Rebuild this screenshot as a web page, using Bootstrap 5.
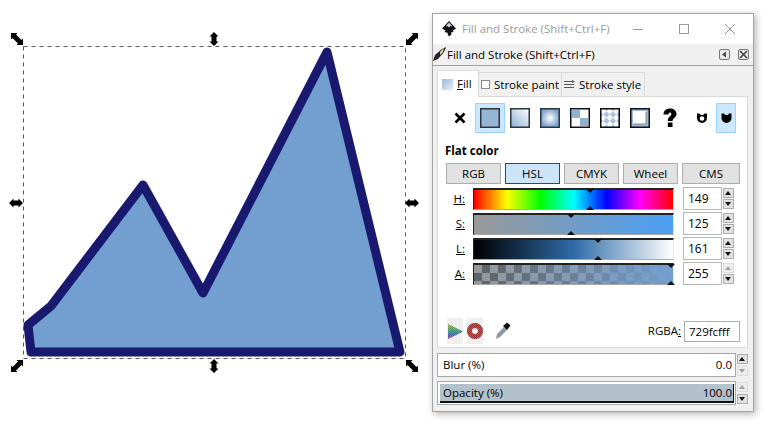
<!doctype html>
<html lang="en">
<head>
<meta charset="utf-8">
<title>Fill and Stroke</title>
<link href="https://cdn.jsdelivr.net/npm/bootstrap@5.3.1/dist/css/bootstrap.min.css" rel="stylesheet">
<style>
body { margin: 0; background: #fff; overflow: hidden; font-family: "Open Sans", "Liberation Sans", sans-serif; font-size: 11.5px; color: #000; line-height: 1; }
.stage { position: relative; width: 775px; height: 431px; overflow: hidden; }
.canvas-art { position: absolute; left: 0; top: 0; }

/* dialog window */
.dlg { position: absolute; left: 432px; top: 13px; width: 322px; height: 399px; background: #f0f0f0; border: 1px solid #a3a3a3; box-shadow: 2px 2px 7px rgba(0,0,0,.3); display: flex; flex-direction: column; }
.titlebar { height: 30px; background: #fff; flex: none; }
.title-txt { margin-left: 5px; color: #9a9a9a; white-space: nowrap; }
.win-btn { width: 46px; display: flex; justify-content: center; flex: none; }
.dockbar { height: 22px; border-bottom: 1px solid #a0a0a0; flex: none; }
.dock-btn { width: 11px; height: 11px; border: 1px solid #777; border-radius: 2px; background: #e8e8e8; display: block; }

/* tabs */
.tabs-wrap { padding: 4px 5px 0 4px; flex: none; height: 282px; display: flex; flex-direction: column; }
.tabs-row { height: 26px; flex: none; align-items: flex-end; position: relative; z-index: 1; }
.tab-item { height: 24px; width: 84px; padding: 0 2px; background: #f0f0f0; border: 1px solid #d9d9d9; border-bottom: 0; display: flex; align-items: center; gap: 4px; margin-left: -1px; white-space: nowrap; }
.tab-item svg { flex: none; }
.tab-item.on { height: 27px; width: 42px; background: #fff; margin-left: 0; margin-bottom: -1px; padding-left: 4px; }
.tab-body { flex: 1; background: #fff; border: 1px solid #d9d9d9; padding: 6px 7px 0 7px; display: flex; flex-direction: column; }

.paint-row { height: 30px; flex: none; }
.paint-x { width: 30px; font-size: 0; padding-left: 9px; flex: none; }
.paint-btn { width: 30px; height: 30px; display: flex; align-items: center; justify-content: center; flex: none; }
.paint-btn.on { background: #cce8ff; border: 1px solid #99d1ff; }
.rule-btn { width: 20px; height: 30px; display: flex; align-items: center; justify-content: center; flex: none; }
.rule-btn.on { background: #cce8ff; border: 1px solid #99d1ff; }
.flat-lbl { font-weight: 700; margin: 12px 0 6px 0; height: 12px; line-height: 12px; }

.mode-row { gap: 4px; height: 21px; margin-left: 1px; margin-bottom: 4px; }
.mode-btn { width: 55px; height: 21px; background: #e1e1e1; border: 1px solid #adadad; border-radius: 0; padding: 0; font-size: 11.5px; line-height: 19px; color: #000; }
.mode-btn:last-child { width: 58px; }
.mode-btn.on, .mode-btn.on:hover { background: #cce4f7; border-color: #005499; color: #000; }

.slider-row { height: 21px; margin-bottom: 4px; align-items: center; }
.slider-lbl { width: 20px; text-align: right; flex: none; margin-right: 8px; text-decoration: underline; text-decoration-thickness: 1px; }
.slider-bar { position: relative; width: 201px; height: 22px; flex: none; border-top: 2px solid #222; border-left: 1px solid #222; border-bottom: 1px solid #a8a8a8; border-right: 1px solid #e6e6e6; }
.g-h { background: linear-gradient(to right, #f00, #ff0 16.6%, #0f0 33.3%, #0ff 50%, #00f 66.6%, #f0f 83.3%, #f00); }
.g-s { background: linear-gradient(to right, #999, #4a9ff5); }
.g-l { background: linear-gradient(to right, #000, #2f6ba8 50%, #fff); }
.g-a { background: linear-gradient(to right, rgba(114,159,207,.05), #729fcf), repeating-conic-gradient(#5e5e5e 0 25%, #989898 0 50%) 0 0 / 16px 16px; }
.mark-top, .mark-btm { position: absolute; width: 0; height: 0; border-left: 4px solid transparent; border-right: 4px solid transparent; margin-left: -4px; }
.mark-top { top: -1px; border-top: 4px solid #111; }
.mark-btm { bottom: -1px; border-bottom: 4px solid #111; }
.num-box { width: 39px; height: 23px; margin-left: 9px; background: #fff; border: 1px solid #b5b5b5; padding-left: 4px; line-height: 21px; flex: none; font-size: 12px; }
.spin { width: 11px; margin-left: 1px; display: flex; flex-direction: column; gap: 1px; flex: none; }
.spin-up, .spin-dn { height: 10px; background: #e1e1e1; border: 1px solid #adadad; position: relative; }
.spin-up::after, .spin-dn::after { content: ""; position: absolute; left: 1px; top: 2px; border-left: 3.5px solid transparent; border-right: 3.5px solid transparent; }
.spin-up::after { border-bottom: 4px solid #111; }
.spin-dn::after { border-top: 4px solid #111; }
.spin .off { background: #efefef; border-color: #dcdcdc; }
.spin .off.spin-up::after { border-bottom-color: #a0a0a0; }
.spin .off.spin-dn::after { border-top-color: #a0a0a0; }

.tool-row { margin-top: auto; height: 26px; margin-bottom: 3px; margin-left: 2px; }
.tool-ic { width: 16px; height: 26px; background: #efefef; display: flex; align-items: center; justify-content: center; margin-right: 4px; }
.rgba-lbl { margin-left: auto; margin-right: 3px; }
.rgba-box { width: 56px; height: 21px; background: #fff; border: 1px solid #adadad; padding-left: 4px; line-height: 19px; }

.adj-row { margin: 5px 5px 0 4px; height: 24px; flex: none; }
.adj-box { width: 301px; height: 24px; background: #fff; border: 1px solid #a8a8a8; position: relative; }
.adj-fill { position: absolute; left: 2px; top: 2px; bottom: 1px; right: 1px; background: #b3c1cb; border-right: 1px solid #111; border-bottom: 2px solid #111; }
.adj-txt { position: absolute; left: 5px; right: 3px; top: 0; height: 22px; display: flex; justify-content: space-between; align-items: center; }
.adj-spin { margin-left: 1px; margin-top: 1px; gap: 2px; }
</style>
</head>
<body>
<div class="stage">
  <svg class="canvas-art" width="432" height="431" viewBox="0 0 432 431">
    <defs>
      <path id="arrowDiag" d="M-6-6H0.500L-1-4.500 4.500 1 6-.5V6H-.5L1 4.500-4.500-1-6 .5z" fill="#000"/>
      <path id="arrowH" d="M-7 0L-2.500-4.500V-2.500H2.500V-4.500L7 0 2.500 4.500V2.500H-2.500V4.500z" fill="#000"/>
      <path id="arrowV" d="M0-7L4.500-2.500H2.500V2.500H4.500L0 7-4.500 2.500H-2.500V-2.500H-4.500z" fill="#000"/>
    </defs>
    <path d="M28 325L51 306L143 185L203 293L327 52L400 352H31Z" fill="#729fcf" stroke="#191970" stroke-width="9" stroke-linejoin="round"/>
    <rect x="23.500" y="46.500" width="382" height="312" fill="none" stroke="#555" stroke-dasharray="4 4"/>
    <use href="#arrowDiag" x="17" y="39"/>
    <use href="#arrowDiag" transform="translate(412 39) scale(-1 1)"/>
    <use href="#arrowDiag" transform="translate(17 366) scale(1 -1)"/>
    <use href="#arrowDiag" transform="translate(412 366) scale(-1 -1)"/>
    <use href="#arrowV" x="214" y="39"/>
    <use href="#arrowV" x="214" y="366"/>
    <use href="#arrowH" x="16" y="203"/>
    <use href="#arrowH" x="412" y="203"/>
  </svg>

  <div class="dlg">
    <div class="titlebar d-flex align-items-center">
      <svg class="ms-2" width="16" height="16" viewBox="0 0 16 16"><path d="M8 0L15 7.500 12 9.500 12.500 11 10 11.500 10.500 13.500 8 15.500 6.500 13 7 12 3.500 11 4.500 9.500 1 7.500z" fill="#111"/><path d="M8 1.500L4.500 5.500 6.500 5 8 6.500 9.500 5 11.500 5.500z" fill="#cfd3d8"/></svg>
      <span class="title-txt flex-grow-1">Fill and Stroke (Shift+Ctrl+F)</span>
      <span class="win-btn"><svg width="10" height="10"><path d="M0 5.500H10" stroke="#999"/></svg></span>
      <span class="win-btn"><svg width="10" height="10"><rect x=".5" y=".5" width="9" height="9" fill="none" stroke="#999"/></svg></span>
      <span class="win-btn"><svg width="10" height="10"><path d="M0 0L10 10M10 0L0 10" stroke="#999"/></svg></span>
    </div>
    <div class="dockbar d-flex align-items-center">
      <svg width="14" height="15" viewBox="0 0 14 15"><path d="M0 14L2 8 9 2 13 0 11 5 5 12z" fill="#222"/><path d="M7 5L11 1 10 5 7 8z" fill="#e8d9a0"/></svg>
      <span class="flex-grow-1">Fill and Stroke (Shift+Ctrl+F)</span>
      <span class="dock-btn me-2"><svg class="d-block" width="9" height="9"><path d="M6 1.500V7.500L2 4.500z" fill="#444"/></svg></span>
      <span class="dock-btn me-1"><svg class="d-block" width="9" height="9"><path d="M1 1L8 8M8 1L1 8" stroke="#444" stroke-width="1.600"/></svg></span>
    </div>

    <div class="tabs-wrap">
      <div class="tabs-row d-flex">
        <div class="tab-item on"><svg width="11" height="11"><defs><linearGradient id="tabFill" x1="0" y1="0" x2="1" y2="1"><stop offset="0" stop-color="#9db8da"/><stop offset="1" stop-color="#e6eef7"/></linearGradient></defs><rect width="11" height="11" fill="url(#tabFill)"/></svg><span><u>F</u>ill</span></div>
        <div class="tab-item"><svg width="9" height="9"><rect x=".5" y=".5" width="8" height="8" fill="#fff" stroke="#888"/></svg><span>Stroke paint</span></div>
        <div class="tab-item"><svg width="11" height="9"><path d="M0 1.500H8M0 4.500H10M0 7.500H10" stroke="#555"/><path d="M8 0L11 1.500 8 3z" fill="#555"/></svg><span>Stroke style</span></div>
      </div>
      <div class="tab-body">
        <div class="paint-row d-flex align-items-center">
          <div class="paint-x"><svg width="12" height="12"><path d="M1.500 1.500L10.500 10.500M10.500 1.500L1.500 10.500" stroke="#000" stroke-width="2.600"/></svg></div>
          <div class="paint-btn on"><svg width="20" height="20"><rect x=".75" y=".75" width="18.500" height="18.500" fill="#96b4d4" stroke="#2c3440" stroke-width="1.500"/></svg></div>
          <div class="paint-btn"><svg width="20" height="20"><defs><linearGradient id="gLin" x1="0" y1="1" x2="1" y2="0"><stop offset="0" stop-color="#8fb0d3"/><stop offset="1" stop-color="#fff"/></linearGradient></defs><rect x=".75" y=".75" width="18.500" height="18.500" fill="url(#gLin)" stroke="#2c3440" stroke-width="1.500"/></svg></div>
          <div class="paint-btn"><svg width="20" height="20"><defs><radialGradient id="gRad"><stop offset="0" stop-color="#fff"/><stop offset="1" stop-color="#7fa4cc"/></radialGradient></defs><rect x=".75" y=".75" width="18.500" height="18.500" fill="url(#gRad)" stroke="#2c3440" stroke-width="1.500"/></svg></div>
          <div class="paint-btn"><svg width="20" height="20"><rect x=".75" y=".75" width="18.500" height="18.500" fill="#fff" stroke="#111" stroke-width="1.500"/><path d="M2 2H10V10H2zM10 10H18V18H10z" fill="#8fb0d3"/></svg></div>
          <div class="paint-btn"><svg width="20" height="20"><defs><pattern id="gPat" width="6.500" height="6.500" patternUnits="userSpaceOnUse"><rect width="6.500" height="6.500" fill="#a9c3df"/><path d="M3.250 0L6.500 3.250 3.250 6.500 0 3.250z" fill="#fff"/></pattern></defs><rect x=".75" y=".75" width="18.500" height="18.500" fill="url(#gPat)" stroke="#111" stroke-width="1.500"/></svg></div>
          <div class="paint-btn"><svg width="20" height="20"><rect x=".75" y=".75" width="18.500" height="18.500" fill="#9db8d6" stroke="#111" stroke-width="1.500"/><rect x="3" y="3" width="13" height="13" fill="#fff"/><path d="M16 4V16H4" fill="none" stroke="#888" stroke-width="1"/></svg></div>
          <div class="paint-btn"><svg width="18" height="20" viewBox="0 0 16 20"><path d="M1.500 6.500C1.500 2.500 4.500 .5 8 .5s6.500 2 6.500 5.500c0 3.800-4 4-4 7H5.800c0-4.500 3.500-4.500 3.500-7 0-1-.5-1.500-1.300-1.500-1 0-1.500.8-1.500 2z" fill="#000"/><rect x="5.800" y="14.500" width="4.700" height="4.500" fill="#000"/></svg></div>
          <div class="flex-grow-1"></div>
          <div class="rule-btn me-1"><svg width="12" height="12" viewBox="0 0 12 12"><path d="M1 1.500h2.500C4 2.500 5 3 6 3s2-.5 2.500-1.500H11V6A5 5 0 0 1 1 6z" fill="#000"/><circle cx="6" cy="6.500" r="2.300" fill="#fff"/></svg></div>
          <div class="rule-btn on me-1"><svg width="13" height="12" viewBox="0 0 12 12"><path d="M1 1.500h2.500C4 2.500 5 3 6 3s2-.5 2.500-1.500H11V6A5 5 0 0 1 1 6z" fill="#000"/></svg></div>
        </div>

        <div class="flat-lbl">Flat color</div>

        <div class="mode-row d-flex">
          <button type="button" class="btn mode-btn">RGB</button>
          <button type="button" class="btn mode-btn on">HSL</button>
          <button type="button" class="btn mode-btn">CMYK</button>
          <button type="button" class="btn mode-btn">Wheel</button>
          <button type="button" class="btn mode-btn">CMS</button>
        </div>

        <div class="slider-row d-flex">
          <span class="slider-lbl">H:</span>
          <div class="slider-bar g-h"><i class="mark-top" style="left:116px"></i><i class="mark-btm" style="left:116px"></i></div>
          <div class="num-box">149</div>
          <div class="spin"><div class="spin-up"></div><div class="spin-dn"></div></div>
        </div>
        <div class="slider-row d-flex">
          <span class="slider-lbl">S:</span>
          <div class="slider-bar g-s"><i class="mark-top" style="left:97px"></i><i class="mark-btm" style="left:97px"></i></div>
          <div class="num-box">125</div>
          <div class="spin"><div class="spin-up"></div><div class="spin-dn"></div></div>
        </div>
        <div class="slider-row d-flex">
          <span class="slider-lbl">L:</span>
          <div class="slider-bar g-l"><i class="mark-top" style="left:124px"></i><i class="mark-btm" style="left:124px"></i></div>
          <div class="num-box">161</div>
          <div class="spin"><div class="spin-up"></div><div class="spin-dn"></div></div>
        </div>
        <div class="slider-row d-flex">
          <span class="slider-lbl">A:</span>
          <div class="slider-bar g-a"><i class="mark-top" style="left:197px"></i><i class="mark-btm" style="left:197px"></i></div>
          <div class="num-box">255</div>
          <div class="spin"><div class="spin-up off"></div><div class="spin-dn"></div></div>
        </div>

        <div class="tool-row d-flex align-items-center">
          <div class="tool-ic"><svg width="15" height="15" viewBox="0 0 15 15"><defs><pattern id="chk" width="2" height="2" patternUnits="userSpaceOnUse"><rect width="2" height="2" fill="#e8e8e8"/><rect width="1" height="1" fill="#666"/><rect x="1" y="1" width="1" height="1" fill="#666"/></pattern><linearGradient id="triG" x1="0" y1="0" x2="0" y2="1"><stop offset="0" stop-color="#c8b040" stop-opacity=".8"/><stop offset=".4" stop-color="#30a868" stop-opacity=".8"/><stop offset=".7" stop-color="#4060c0" stop-opacity=".8"/><stop offset="1" stop-color="#a040a0" stop-opacity=".8"/></linearGradient></defs><path d="M0 0L15 7.500 0 15z" fill="url(#chk)"/><path d="M0 0L15 7.500 0 15z" fill="url(#triG)"/></svg></div>
          <div class="tool-ic"><svg width="16" height="16" viewBox="0 0 16 16"><circle cx="8" cy="8" r="5.500" fill="none" stroke="url(#chk)" stroke-width="5"/><circle cx="8" cy="8" r="5.500" fill="none" stroke="#b01818" stroke-opacity=".7" stroke-width="5"/></svg></div>
          <svg class="ms-2" width="16" height="18" viewBox="0 0 16 18"><path d="M1 17L2 12 9 5 12 8 5 15z" fill="#8a9aa8"/><path d="M8 4L12 0.500 15.500 3.500 12 8z" fill="#111"/></svg>
          <span class="rgba-lbl">RGBA<u>:</u></span>
          <div class="rgba-box">729fcfff</div>
        </div>
      </div>
    </div>

    <div class="adj-row d-flex">
      <div class="adj-box"><div class="adj-txt"><span>Blur (%)</span><span>0.0</span></div></div>
      <div class="spin adj-spin"><div class="spin-up"></div><div class="spin-dn off"></div></div>
    </div>
    <div class="adj-row d-flex" style="margin-top:4px">
      <div class="adj-box"><div class="adj-fill"></div><div class="adj-txt"><span>Opacity (%)</span><span>100.0</span></div></div>
      <div class="spin adj-spin"><div class="spin-up off"></div><div class="spin-dn"></div></div>
    </div>
  </div>
</div>
<script src="https://cdn.jsdelivr.net/npm/bootstrap@5.3.1/dist/js/bootstrap.bundle.min.js"></script>
</body>
</html>
